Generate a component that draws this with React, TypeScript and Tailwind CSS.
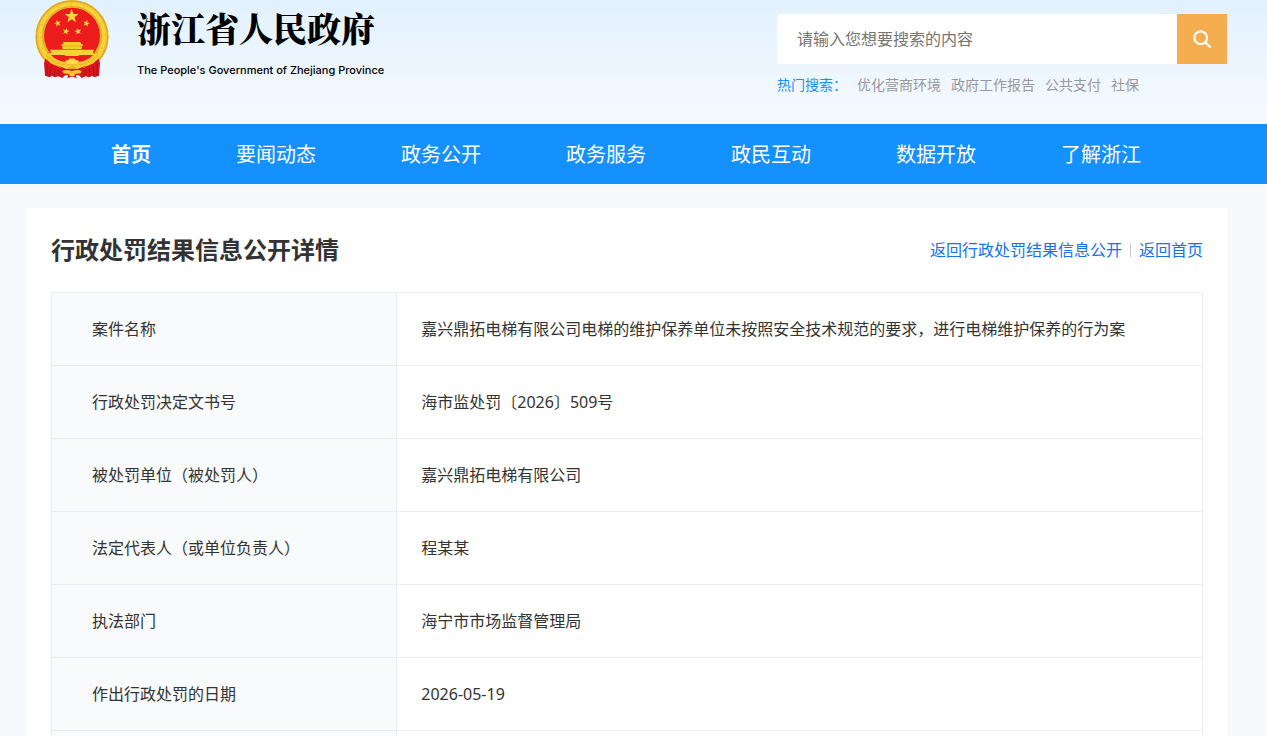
const navItems = ['首页', '要闻动态', '政务公开', '政务服务', '政民互动', '数据开放', '了解浙江'];

const hotSearches = ['优化营商环境', '政府工作报告', '公共支付', '社保'];

const details = [
  { label: '案件名称', value: '嘉兴鼎拓电梯有限公司电梯的维护保养单位未按照安全技术规范的要求，进行电梯维护保养的行为案' },
  { label: '行政处罚决定文书号', value: '海市监处罚〔2026〕509号' },
  { label: '被处罚单位（被处罚人）', value: '嘉兴鼎拓电梯有限公司' },
  { label: '法定代表人（或单位负责人）', value: '程某某' },
  { label: '执法部门', value: '海宁市市场监督管理局' },
  { label: '作出行政处罚的日期', value: '2026-05-19' },
];

const STAR = 'M0-10 2.4-3.2 9.5-3.1 3.8 1.2 5.9 8.1 0 4-5.9 8.1-3.8 1.2-9.5-3.1-2.4-3.2Z';

function Emblem() {
  return (
    <svg viewBox="30 0 222 240" className="h-20 w-[74px] shrink-0" aria-hidden="true">
      <circle cx="141" cy="110" r="110" fill="#f0c42e" />
      <circle cx="141" cy="110" r="107" fill="none" stroke="#e0a826" strokeWidth="4" />
      <circle cx="141" cy="109" r="97" fill="none" stroke="#f7d43c" strokeWidth="9" strokeDasharray="34 4" />
      <circle cx="141" cy="107" r="87" fill="none" stroke="#dfa423" strokeWidth="3" />
      <circle cx="141" cy="107" r="84" fill="#ea1c1c" />
      <path d="M66 158h150l-18 34-30 14h-54l-30-14z" fill="#ea1c1c" />
      <g fill="#fbd63c">
        <path d={STAR} transform="translate(140 49) scale(2.2)" />
        <path d={STAR} transform="translate(98 70) rotate(-15) scale(1.1)" />
        <path d={STAR} transform="translate(184 70) rotate(15) scale(1.1)" />
        <path d={STAR} transform="translate(123 94) rotate(12) scale(1.1)" />
        <path d={STAR} transform="translate(159 94) rotate(-12) scale(1.1)" />
      </g>
      <path d="M116 126h50l3 7h-56zM109 133h64v5h-64zM112 138h58v10h-58z" fill="#f5cc2e" />
      <path d="M109 138h64" stroke="#dca123" strokeWidth="2" />
      <path d="M75 149h132l-3 8 5 8h-45l-4 3h-38l-4-3H73l5-8z" fill="#f7d137" />
      <path d="M62 172 57 190 60 227 74 232 80 227 90 232 100 229 112 234 120 226 162 226 170 234 182 229 192 232 202 227 208 232 222 227 225 190 220 172 205 190 175 204H107L77 190Z" fill="#d9141f" />
      <path d="M66 194v34M78 200l-3 28M90 206l-2 22M103 209l-3 18M216 194v34M204 200l3 28M192 206l2 22M179 209l3 18" stroke="#b00f1a" strokeWidth="3" fill="none" />
      <path d="M52 166 72 158Q92 184 122 186L130 192H152L160 186Q190 184 210 158L230 166Q210 194 170 202L160 206H122L112 202Q72 194 52 166Z" fill="#f5cb30" />
      <path d="M64 166q22 24 56 29M218 166q-22 24-56 29" stroke="#dda424" strokeWidth="2" fill="none" />
      <path d="M120 188q1-9 9-7 4-8 12-5 8-3 12 5 8-2 9 7l-9 6h-24z" fill="#fbdc4c" stroke="#dca123" strokeWidth="2" />
      <path d="M130 203q11-10 22 0v4h-22z" fill="#e8b226" />
      <path d="M112 213q14-6 29 0 15-6 29 0l-3 7-15 2-11 10-11-10-15-2z" fill="#f3c52c" />
      <path d="M130 224l11-7 11 7 3 11-14-6-14 6z" fill="#d9141f" />
      <path d="M131 221l10-5 10 5-4 7h-12z" fill="#f5cb30" />
    </svg>
  );
}

function SearchIcon() {
  return (
    <svg viewBox="0 0 54 54" className="size-[18px]" fill="none" stroke="#fff" strokeWidth="6.5" strokeLinecap="round" aria-hidden="true">
      <circle cx="23" cy="23" r="19" />
      <path d="M37 37 51 51" />
    </svg>
  );
}

export default function App() {
  return (
    <div className="flex h-screen flex-col overflow-hidden bg-[#f7f9fc] font-['Noto_Sans','Noto_Sans_CJK_SC',sans-serif] text-base text-[#333]">
      <header className="flex h-[124px] shrink-0 items-start justify-between bg-linear-to-b from-[#e2f1ff] to-[#f6faff] pr-10 pl-[35px]">
        <a href="#" className="flex items-start gap-7 text-black">
          <Emblem />
          <span className="flex flex-col gap-2 pt-1">
            <span className="font-['Noto_Serif_CJK_SC','Noto_Sans_CJK_SC',serif] text-[34px] leading-[48px] font-black whitespace-nowrap">浙江省人民政府</span>
            <span className="font-['Inter',sans-serif] text-[11px] leading-5 font-medium whitespace-nowrap">The People's Government of Zhejiang Province</span>
          </span>
        </a>
        <div className="w-[450px] pt-3.5">
          <form className="flex h-[50px]" onSubmit={(e) => e.preventDefault()}>
            <input
              type="text"
              aria-label="搜索"
              placeholder="请输入您想要搜索的内容"
              className="min-w-0 flex-1 rounded-l bg-white px-5 text-base outline-none placeholder:text-[#757575]"
            />
            <button type="submit" aria-label="搜索" className="flex w-[50px] items-center justify-center bg-[#f5ae4f]">
              <SearchIcon />
            </button>
          </form>
          <div className="mt-2.5 flex gap-2.5 text-sm leading-[22px] whitespace-nowrap text-[#999]">
            <span className="text-[#1890ff]">热门搜索：</span>
            {hotSearches.map((item) => (
              <a key={item} href="#">{item}</a>
            ))}
          </div>
        </div>
      </header>

      <nav className="flex h-[60px] shrink-0 items-center gap-[85px] bg-[#1590ff] pt-0.5 pl-[111px] text-xl whitespace-nowrap text-white">
        {navItems.map((item, i) => (
          <a key={item} href="#" className={i === 0 ? 'font-bold' : ''}>{item}</a>
        ))}
      </nav>

      <main className="mt-6 mr-10 ml-[27px] min-h-0 flex-1 bg-white px-6">
        <div className="flex h-[84px] items-center justify-between">
          <h1 className="text-2xl font-bold">行政处罚结果信息公开详情</h1>
          <div className="flex items-center gap-2 text-[#1472f5]">
            <a href="#">返回行政处罚结果信息公开</a>
            <span className="h-3.5 w-px bg-[#ccc]" />
            <a href="#">返回首页</a>
          </div>
        </div>
        <table className="w-full table-fixed border-collapse text-left">
          <colgroup>
            <col className="w-[30%]" />
            <col />
          </colgroup>
          <tbody>
            {details.map(({ label, value }) => (
              <tr key={label} className="h-[73px]">
                <th scope="row" className="border border-[#ebedf0] bg-[#f8fafc] pr-6 pl-10 font-normal">{label}</th>
                <td className="border border-[#ebedf0] px-6">{value}</td>
              </tr>
            ))}
            <tr className="h-[73px]">
              <th scope="row" className="border border-[#ebedf0] bg-[#f8fafc]" />
              <td className="border border-[#ebedf0]" />
            </tr>
          </tbody>
        </table>
      </main>
    </div>
  );
}
